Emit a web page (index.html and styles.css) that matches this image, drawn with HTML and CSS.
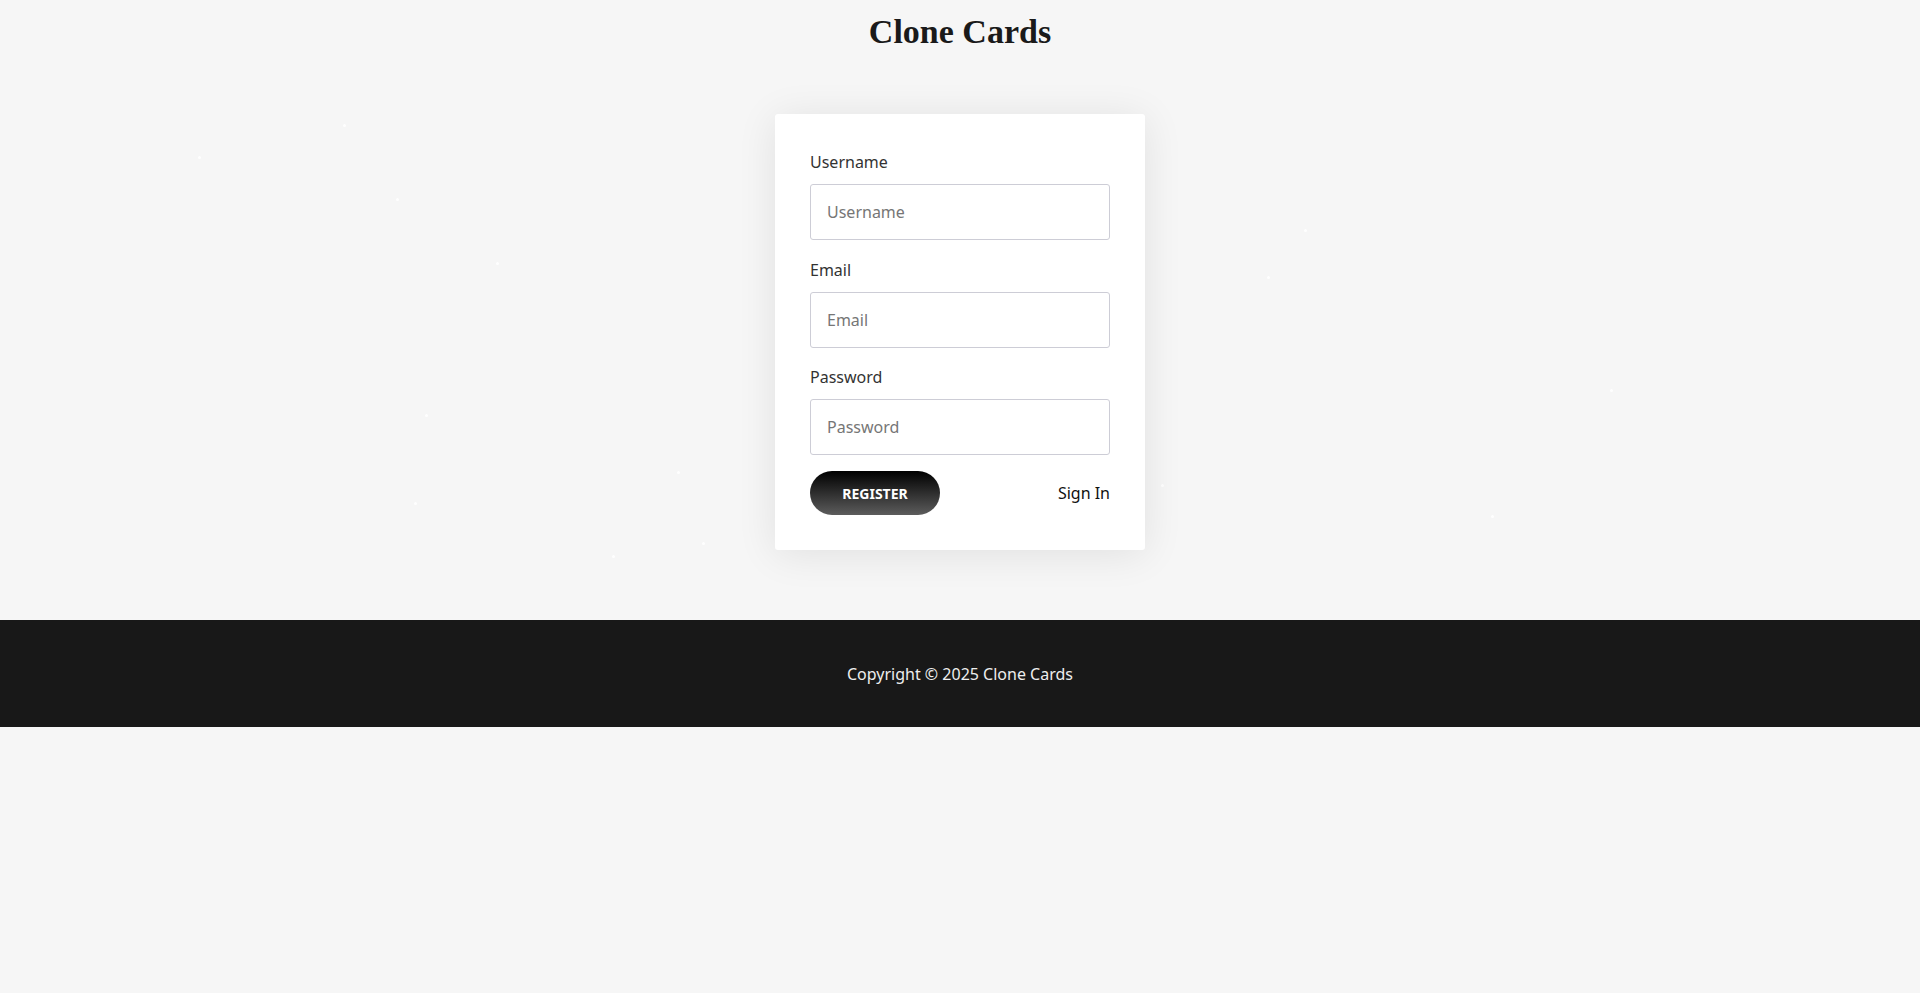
FILE: index.html
```html
<!DOCTYPE html>
<html lang="en">
<head>
    <meta charset="UTF-8">
    <meta name="viewport" content="width=device-width, initial-scale=1.0">
    <title>Clone Cards - Register</title>
    <link rel="stylesheet" href="styles.css">
</head>
<body>
    <div class="particles">
        <span class="dot" style="left:343px;top:124px"></span>
        <span class="dot" style="left:198px;top:156px"></span>
        <span class="dot" style="left:396px;top:198px"></span>
        <span class="dot" style="left:496px;top:262px"></span>
        <span class="dot" style="left:425px;top:414px"></span>
        <span class="dot" style="left:677px;top:471px"></span>
        <span class="dot" style="left:414px;top:502px"></span>
        <span class="dot" style="left:702px;top:542px"></span>
        <span class="dot" style="left:612px;top:555px"></span>
        <span class="dot" style="left:1304px;top:229px"></span>
        <span class="dot" style="left:1267px;top:276px"></span>
        <span class="dot" style="left:1610px;top:389px"></span>
        <span class="dot" style="left:1161px;top:484px"></span>
        <span class="dot" style="left:1491px;top:515px"></span>
    </div>

    <header class="site-header">
        <h1>Clone Cards</h1>
    </header>

    <main class="page">
        <div class="card">
            <form id="registerForm" onsubmit="register(event)">
                <div class="form-group">
                    <label for="username">Username</label>
                    <input type="text" id="username" placeholder="Username" required>
                </div>
                <div class="form-group">
                    <label for="email">Email</label>
                    <input type="email" id="email" placeholder="Email" required>
                </div>
                <div class="form-group last">
                    <label for="password">Password</label>
                    <input type="password" id="password" placeholder="Password" required>
                </div>
                <div class="form-actions">
                    <button type="submit" class="btn-register">REGISTER</button>
                    <a href="#" class="sign-in">Sign In</a>
                </div>
            </form>
        </div>
    </main>

    <footer class="site-footer">
        <p>Copyright &copy; 2025 Clone Cards</p>
    </footer>

    <script>
        function register(event) {
            event.preventDefault();
            document.getElementById('registerForm').reset();
        }
    </script>
</body>
</html>
```

FILE: styles.css
```css
body {
    margin: 0;
    padding: 0;
    font-family: "Noto Sans", "Open Sans", Arial, sans-serif;
    background-color: #f6f6f6;
    color: #333;
    position: relative;
    min-height: 993px;
}
.particles {
    position: absolute;
    top: 0;
    left: 0;
    width: 100%;
    height: 620px;
    pointer-events: none;
}
.dot {
    position: absolute;
    width: 3px;
    height: 3px;
    border-radius: 50%;
    background: #fff;
    opacity: 0.9;
}
.site-header {
    text-align: center;
    padding-top: 13px;
}
.site-header h1 {
    margin: 0;
    font-family: "Liberation Serif", "Times New Roman", serif;
    font-size: 34px;
    font-weight: bold;
    color: #1a1a1a;
    line-height: 38px;
}
.page {
    display: flex;
    justify-content: center;
    padding: 63px 0 70px;
    position: relative;
}
.card {
    width: 370px;
    box-sizing: border-box;
    background: #fff;
    padding: 37px 35px 35px 35px;
    border-radius: 3px;
    box-shadow: 0 4px 40px rgba(0, 0, 0, 0.09);
}
.form-group {
    margin-bottom: 18.5px;
}
.form-group.last {
    margin-bottom: 16px;
}
.form-group label {
    display: block;
    font-size: 16px;
    line-height: 22px;
    margin-bottom: 11px;
    color: #333;
}
.form-group input {
    display: block;
    width: 100%;
    height: 56px;
    box-sizing: border-box;
    padding: 0 16px;
    font-family: inherit;
    font-size: 16px;
    color: #333;
    border: 1px solid #cdcdd6;
    border-radius: 3px;
    background: #fff;
    outline: none;
}
.form-group input::placeholder {
    color: #767676;
}
.form-actions {
    display: flex;
    justify-content: space-between;
    align-items: center;
}
.btn-register {
    width: 130px;
    height: 44px;
    border: none;
    border-radius: 22px;
    background: linear-gradient(#000, #5c5c5c);
    color: #fff;
    font-family: inherit;
    font-size: 14px;
    font-weight: bold;
    cursor: pointer;
}
.sign-in {
    font-size: 16px;
    color: #111;
    text-decoration: none;
}
.site-footer {
    background-color: #181818;
    height: 107px;
    display: flex;
    align-items: center;
    justify-content: center;
    position: relative;
}
.site-footer p {
    margin: 0;
    color: #eee;
    font-size: 16px;
}
```
